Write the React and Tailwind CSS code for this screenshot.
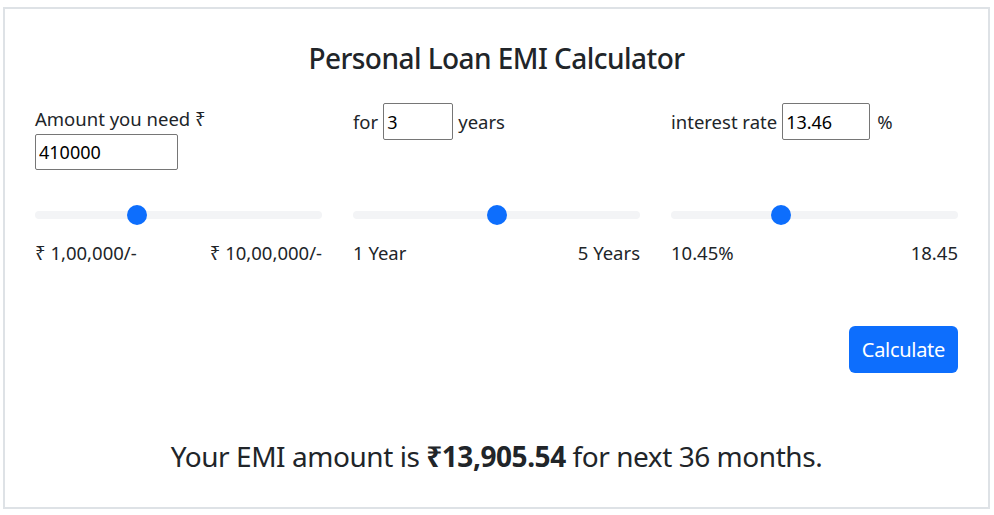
import React from 'react';

const Slider = ({ value, min, max }) => {
  const pct = (value - min) / (max - min);
  return (
    <div className="relative h-[20px] mt-[35px]">
      <div className="absolute left-0 right-0 top-[6px] h-[8px] rounded-full bg-[#f3f4f6]" />
      <div
        className="absolute top-0 w-[20px] h-[20px] rounded-full bg-[#0d6efd]"
        style={{ left: `calc(${pct} * (100% - 20px))` }}
      />
    </div>
  );
};

const Range = ({ left, right }) => (
  <div className="flex justify-between mt-[14px] leading-[27px]">
    <span>{left}</span>
    <span>{right}</span>
  </div>
);

const inputCls =
  'border border-[#767676] rounded-[2px] px-[3px] text-[18px] text-black outline-none bg-white';

const App = () => {
  return (
    <div className="p-[3px] pt-[7px] bg-white min-h-screen" style={{ fontFamily: '"Noto Sans", "DejaVu Sans", sans-serif' }}>
      <div className="border-2 border-[#dee2e6] h-[502px] w-[987px] px-[30px] text-[#212529] text-[18.5px]">
        <h3 className="text-center text-[28px] font-medium leading-[34px] mt-[32px] tracking-[-0.55px]">
          Personal Loan EMI Calculator
        </h3>

        <div className="grid grid-cols-3 gap-x-[31px] mt-[28px]">
          <div>
            <div className="h-[67px] flex flex-col">
              <label className="leading-[27px] mt-[2px]">Amount you need ₹</label>
              <input className={`${inputCls} w-[143px] h-[36px] mt-[2px]`} defaultValue="410000" />
            </div>
            <Slider value={410000} min={100000} max={1000000} />
            <Range left="₹ 1,00,000/-" right="₹ 10,00,000/-" />
          </div>

          <div>
            <div className="h-[67px] flex items-start">
              <div className="flex items-center gap-[5px]">
                <span>for</span>
                <input className={`${inputCls} w-[70px] h-[37px]`} defaultValue="3" />
                <span>years</span>
              </div>
            </div>
            <Slider value={3} min={1} max={5} />
            <Range left="1 Year" right="5 Years" />
          </div>

          <div>
            <div className="h-[67px] flex items-start">
              <div className="flex items-center gap-[5px]">
                <span>interest rate</span>
                <input className={`${inputCls} w-[88px] h-[37px]`} defaultValue="13.46" />
                <span className="ml-[2px]">%</span>
              </div>
            </div>
            <Slider value={13.46} min={10.45} max={18.45} />
            <Range left="10.45%" right="18.45" />
          </div>
        </div>

        <div className="flex justify-end mt-[60px]">
          <button className="bg-[#0d6efd] text-white text-[20px] leading-[30px] px-[13px] py-[8px] rounded-[6px] h-[47px] tracking-[-0.3px]">
            Calculate
          </button>
        </div>

        <p className="text-center text-[28px] leading-[42px] mt-[62px] tracking-[-0.45px]">
          Your EMI amount is <b className="font-bold">₹13,905.54</b> for next 36 months.
        </p>
      </div>
    </div>
  );
};

export default App;
